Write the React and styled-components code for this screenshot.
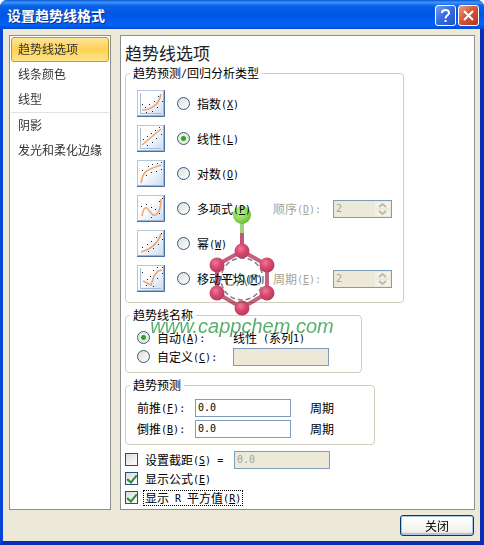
import React, {useState} from 'react';
import styled, {createGlobalStyle} from 'styled-components';

const GlobalStyle = createGlobalStyle`
  * {
    box-sizing: border-box;
  }

  body {
    margin: 0;
    font-family: "Noto Sans CJK SC", sans-serif;
    font-size: 12px;
    line-height: 14px;
    color: #000;
  }

  button, input {
    font: inherit;
  }
`;

const Window = styled.div`
  display: flex;
  flex-direction: column;
  min-height: 100vh;
  background-color: #ece9d8;
  border: solid #0846d8;
  border-width: 0 4px 4px 3px;
  border-right-color: #0a2fb4;
  border-bottom-color: #0a2fb4;
  border-radius: 7px 7px 0 0;
`;

const TitleBar = styled.header`
  display: flex;
  align-items: center;
  gap: 2px;
  height: 29px;
  margin: 0 -4px 0 -3px;
  padding: 2px 5px 0 7px;
  border-radius: 7px 7px 0 0;
  background: linear-gradient(#0a56d0 0%, #3d96ff 8%, #0a62e8 20%, #0054e3 50%, #0064fa 85%, #0048cc 100%);
`;

const Title = styled.h1`
  flex: 1;
  margin: 0;
  padding-bottom: 2px;
  font-size: 14px;
  line-height: 20px;
  font-weight: 700;
  color: #fff;
  text-shadow: 1px 1px #0a318c;
`;

const TitleButton = styled.button`
  display: flex;
  width: 21px;
  height: 21px;
  padding: 0;
  border: 1px solid #fff;
  border-radius: 3px;
  background: ${props => props.$red
    ? 'linear-gradient(135deg, #eba083, #d8563a 45%, #b5341c)'
    : 'linear-gradient(135deg, #7a9ff0, #3a6de0 45%, #1f50c8)'};
`;

const Body = styled.div`
  display: flex;
  flex: 1;
  gap: 9px;
  padding: 6px 5px 5px 6px;
`;

const Sidebar = styled.nav`
  flex: 0 0 101px;
  padding: 1px;
  border: 1px solid #8a8f94;
  background-color: #fff;
`;

const SideItem = styled.a`
  display: block;
  height: 25px;
  padding: 0 6px;
  border: 1px solid ${props => props.$active ? '#c29b29' : 'transparent'};
  border-radius: 3px;
  background: ${props => props.$active ? 'linear-gradient(#fce59b, #fdd153 50%, #fee68c)' : 'none'};
  line-height: 22px;
  color: #333;
  text-decoration: none;
  white-space: nowrap;
`;

const Divider = styled.hr`
  margin: 0;
  border: none;
  border-top: 1px solid #e2e2e2;
`;

const Panel = styled.main`
  position: relative;
  flex: 1;
  min-width: 0;
  display: flex;
  flex-direction: column;
  gap: 5px;
  padding: 6px 5px 1px 4px;
  border: 1px solid #8a8f94;
  background-color: #fff;
`;

const Heading = styled.h2`
  margin: 0 0 -5px;
  font-size: 17px;
  line-height: 22px;
  padding-bottom: 2px;
  font-weight: 400;
  color: #222;
`;

const Group = styled.fieldset`
  width: 100%;
  max-width: ${props => props.$width}px;
  min-width: 0;
  margin: 0;
  padding: 6px 11px;
  border: 1px solid #d0d0bf;
  border-radius: 4px;
`;

const Legend = styled.legend`
  margin-left: -7px;
  padding: 0 3px;
`;

const TypeRow = styled.div`
  display: flex;
  align-items: center;
  height: 35px;
  gap: 12px;
`;

const Thumb = styled.svg`
  flex: none;
  width: 28px;
  height: 27px;
`;

const RadioLabel = styled.label`
  display: flex;
  flex: 1;
  min-width: 0;
  align-items: center;
  gap: 7px;
  white-space: nowrap;
`;

const Radio = styled.input`
  appearance: none;
  flex: none;
  width: 13px;
  height: 13px;
  margin: 0;
  border: 1px solid #35597c;
  border-radius: 50%;
  background: linear-gradient(135deg, #dcdcd7, #fff);

  &:checked {
    background: radial-gradient(circle, #2fa32c 0 2px, #e6efe4 3px);
  }
`;

const Latin = styled.span`
  font-family: "DejaVu Sans Mono", monospace;
  font-size: 10px;
  line-height: 1;
  vertical-align: 1px;
  white-space: pre;
`;

const Key = styled.u`
  text-underline-offset: 1px;
`;

const OrderLabel = styled.label`
  flex: 0 0 46px;
  color: #a5a493;
  white-space: nowrap;
`;

const Spinner = styled.div`
  display: flex;
  flex: 0 0 59px;
  min-width: 0;
  height: 18px;
  border: 1px solid #7f9db9;
  background-color: #ece9d8;
`;

const SpinInput = styled.input`
  flex: 1;
  width: 0;
  min-width: 0;
  padding: 0 2px;
  border: none;
  background: none;
  font-family: "DejaVu Sans Mono", monospace;
  font-size: 10px;
  color: #a5a493;
`;

const SpinButtons = styled.svg`
  flex: none;
  width: 17px;
  height: 16px;
`;

const NameGrid = styled.div`
  display: grid;
  grid-template-columns: 96px 96px;
  grid-auto-rows: 19px;
  align-items: center;
`;

const ForecastGrid = styled.div`
  display: grid;
  grid-template-columns: 58px 96px auto;
  grid-auto-rows: 19px;
  row-gap: 2px;
  align-items: center;
`;

const Unit = styled.span`
  padding-left: 19px;
`;

const TextInput = styled.input`
  width: 96px;
  height: 18px;
  padding: 0 2px;
  border: 1px solid #7f9db9;
  background-color: #fff;
  font-family: "DejaVu Sans Mono", monospace;
  font-size: 10px;
  color: #000;

  &:disabled {
    background-color: #ece9d8;
    color: #a5a493;
  }
`;

const Options = styled.div`
  display: grid;
  grid-template-columns: 109px 96px;
  grid-auto-rows: 19px;
  align-items: center;
`;

const CheckLabel = styled.label`
  display: flex;
  grid-column-start: 1;
  align-items: center;
  gap: 5px;
  white-space: nowrap;
`;

const Checkbox = styled.input`
  appearance: none;
  flex: none;
  width: 13px;
  height: 13px;
  margin: 0;
  border: 1px solid #1c5180;
  background: linear-gradient(135deg, #dcdcd7, #fff);

  &:checked::before {
    content: '';
    display: block;
    width: 4px;
    height: 8px;
    margin: 0 auto;
    border: solid #2b8a3a;
    border-width: 0 2px 2px 0;
    transform: rotate(40deg);
  }
`;

const CheckText = styled.span`
  padding: 0 1px;
  border: 1px dotted ${props => props.$focused ? '#000' : 'transparent'};
`;

const Footer = styled.footer`
  display: flex;
  justify-content: flex-end;
  padding: 0 6px 5px;
`;

const CloseButton = styled.button`
  width: 74px;
  height: 21px;
  padding: 0;
  border: 1px solid #003c74;
  border-radius: 3px;
  background: linear-gradient(#fff, #f2f1ea 80%, #dcd8cb);
  box-shadow: inset 0 0 0 1px #a9c4ea, inset 0 -2px #a9c4ea;
  line-height: 18px;
  color: #000;
`;

const Watermark = styled.div`
  position: absolute;
  top: 170px;
  left: 29px;
  width: 184px;
  display: flex;
  flex-direction: column;
  align-items: center;
  mix-blend-mode: multiply;
  pointer-events: none;
`;

const Molecule = styled.svg`
  width: 66px;
  height: 110px;
`;

const SiteName = styled.span`
  font-family: "Liberation Sans", Arial, sans-serif;
  font-size: 20px;
  line-height: 20px;
  font-style: italic;
  color: #59b06c;
`;

const types = [
  {
    id: 'exp', text: '指数', key: 'X', curve: 'M5 20C14 20 22 15 24 4',
    dots: [[5, 14], [8, 17], [12, 14], [17, 11], [21, 6], [9, 22], [15, 21], [20, 17], [25, 11]],
  },
  {
    id: 'linear', text: '线性', key: 'L', curve: 'M5 20L24 4',
    dots: [[6, 14], [10, 11], [14, 8], [18, 5], [22, 2], [10, 20], [15, 17], [19, 13], [24, 9]],
  },
  {
    id: 'log', text: '对数', key: 'O', curve: 'M4 23C6 11 9 10 24 5', plain: true,
    dots: [[5, 10], [11, 6], [15, 4], [20, 3], [24, 2], [9, 15], [14, 12], [19, 11], [24, 9]],
  },
  {
    id: 'poly', text: '多项式', key: 'P', curve: 'M5 21C7 9 10 12 14 18S24 18 24 4', plain: true,
    dots: [[4, 11], [9, 9], [14, 12], [18, 14], [22, 6], [14, 22], [22, 18], [25, 3]], order: '顺序', orderKey: 'D',
  },
  {
    id: 'power', text: '幂', key: 'W', curve: 'M4 22C15 19 21 13 24 4', plain: true,
    dots: [[5, 17], [10, 14], [14, 11], [19, 7], [24, 3], [11, 21], [16, 18], [21, 14], [25, 9]],
  },
  {
    id: 'moving', text: '移动平均', key: 'M', curve: 'M6 16L14 20L17 11L21 6L25 5',
    dots: [[5, 7], [10, 14], [13, 11], [16, 5], [20, 2], [25, 2], [9, 20], [16, 21], [20, 13], [25, 8]], order: '周期', orderKey: 'E',
  },
];

const sections = ['趋势线选项', '线条颜色', '线型', '阴影', '发光和柔化边缘'];

const atoms = [[33, 45], [8, 59], [58, 59], [8, 87], [58, 87], [33, 102]];

const Hot = ({k, after = ''}) => <Latin>(<Key>{k}</Key>){after}</Latin>;

const TrendIcon = ({curve, dots, plain}) => (
  <Thumb viewBox="0 0 28 27" aria-hidden="true">
    <defs>
      <linearGradient id="thumbBg" x1="0" y1="0" x2="1" y2="1">
        <stop offset="0.4" stopColor="#fff"/>
        <stop offset="1" stopColor="#c3d9f2"/>
      </linearGradient>
    </defs>
    <rect x="0.5" y="0.5" width="27" height="26" fill="url(#thumbBg)" stroke="#b4c8e0"/>
    <path d="M27.500 0V26.500H0" fill="none" stroke="#4f6f9e"/>
    <path d="M26.500 1V25.500H1" fill="none" stroke="#9db6d6"/>
    {!plain && <path d="M3.500 3V23.500H24" fill="none" stroke="#a9bdd8"/>}
    <path d={curve} fill="none" stroke="#eba873" strokeWidth="1.6"/>
    {dots.map(([x, y]) => <rect key={`${x}-${y}`} x={x} y={y} width="1" height="1" fill="#222"/>)}
  </Thumb>
);

const Brand = () => (
  <Watermark aria-hidden="true">
    <Molecule viewBox="0 0 66 110">
      <defs>
        <radialGradient id="pinkBall" cx="0.4" cy="0.35" r="0.65">
          <stop offset="0" stopColor="#ee7a98"/>
          <stop offset="0.5" stopColor="#d84a70"/>
          <stop offset="1" stopColor="#b83a5c"/>
        </radialGradient>
        <radialGradient id="greenBall" cx="0.4" cy="0.35" r="0.65">
          <stop offset="0" stopColor="#bdf58e"/>
          <stop offset="0.6" stopColor="#8cdc55"/>
          <stop offset="1" stopColor="#6cb83f"/>
        </radialGradient>
      </defs>
      <path d="M33 10V28" stroke="#a0d478" strokeWidth="4"/>
      <path d="M33 27V45" stroke="#c4557a" strokeWidth="4"/>
      <path d="M33 45L58 59V87L33 102L8 87V59Z" fill="none" stroke="#c4607c" strokeWidth="4"/>
      <circle cx="33" cy="73" r="21" fill="none" stroke="#88798a" strokeWidth="1.5" strokeDasharray="5 3"/>
      <text x="33" y="80" textAnchor="middle" fontFamily="Liberation Sans" fontSize="17" fill="#7d9c86">CAC</text>
      <circle cx="33" cy="9" r="9" fill="url(#greenBall)"/>
      {atoms.map(([x, y]) => <circle key={`${x}-${y}`} cx={x} cy={y} r="7.5" fill="url(#pinkBall)"/>)}
    </Molecule>
    <SiteName>www.cappchem.com</SiteName>
  </Watermark>
);

const App = () => {
  const [type, setType] = useState('linear');
  const [name, setName] = useState('auto');

  return (
    <>
      <GlobalStyle/>
      <Window>
        <TitleBar>
          <Title>设置趋势线格式</Title>
          <TitleButton aria-label="帮助">
            <svg width="19" height="19" viewBox="0 0 19 19" fill="none" stroke="#fff" strokeWidth="2">
              <path d="M6 7C6 3 13 3 13 7C13 9.500 9.500 9 9.500 12.500M9.500 14V16"/>
            </svg>
          </TitleButton>
          <TitleButton $red aria-label="关闭窗口">
            <svg width="19" height="19" viewBox="0 0 19 19" fill="none" stroke="#fff" strokeWidth="2">
              <path d="M5 5L14 14M14 5L5 14"/>
            </svg>
          </TitleButton>
        </TitleBar>
        <Body>
          <Sidebar>
            {sections.map((text, i) => (
              <React.Fragment key={text}>
                {i === 3 && <Divider/>}
                <SideItem href="#" $active={i === 0}>{text}</SideItem>
              </React.Fragment>
            ))}
          </Sidebar>
          <Panel>
            <Heading>趋势线选项</Heading>
            <Group $width={279}>
              <Legend>趋势预测<Latin>/</Latin>回归分析类型</Legend>
              {types.map(t => (
                <TypeRow key={t.id}>
                  <TrendIcon curve={t.curve} dots={t.dots} plain={t.plain}/>
                  <RadioLabel>
                    <Radio type="radio" name="type" checked={type === t.id} onChange={() => setType(t.id)}/>
                    <span>{t.text}<Hot k={t.key}/></span>
                  </RadioLabel>
                  {t.order && (
                    <>
                      <OrderLabel htmlFor={t.id}>{t.order}<Hot k={t.orderKey} after=":"/></OrderLabel>
                      <Spinner>
                        <SpinInput id={t.id} defaultValue="2" disabled/>
                        <SpinButtons viewBox="0 0 17 16">
                          <path d="M1 1H16V7H1ZM1 9H16V15H1Z" fill="#f3f2ea"/>
                          <path d="M5 6L8.500 3L12 6M5 10L8.500 13L12 10" fill="none" stroke="#bdbbaa" strokeWidth="2"/>
                        </SpinButtons>
                      </Spinner>
                    </>
                  )}
                </TypeRow>
              ))}
            </Group>
            <Group $width={237}>
              <Legend>趋势线名称</Legend>
              <NameGrid>
                <RadioLabel>
                  <Radio type="radio" name="name" checked={name === 'auto'} onChange={() => setName('auto')}/>
                  <span>自动<Hot k="A" after=":"/></span>
                </RadioLabel>
                <span>线性<Latin> (</Latin>系列<Latin>1)</Latin></span>
                <RadioLabel>
                  <Radio type="radio" name="name" checked={name === 'custom'} onChange={() => setName('custom')}/>
                  <span>自定义<Hot k="C" after=":"/></span>
                </RadioLabel>
                <TextInput aria-label="自定义名称" disabled={name === 'auto'}/>
              </NameGrid>
            </Group>
            <Group $width={250}>
              <Legend>趋势预测</Legend>
              <ForecastGrid>
                <label htmlFor="forward">前推<Hot k="F" after=":"/></label>
                <TextInput id="forward" defaultValue="0.0"/>
                <Unit>周期</Unit>
                <label htmlFor="backward">倒推<Hot k="B" after=":"/></label>
                <TextInput id="backward" defaultValue="0.0"/>
                <Unit>周期</Unit>
              </ForecastGrid>
            </Group>
            <Options>
              <CheckLabel>
                <Checkbox type="checkbox"/>
                <CheckText>设置截距<Hot k="S" after=" ="/></CheckText>
              </CheckLabel>
              <TextInput aria-label="截距" defaultValue="0.0" disabled/>
              <CheckLabel>
                <Checkbox type="checkbox" defaultChecked/>
                <CheckText>显示公式<Hot k="E"/></CheckText>
              </CheckLabel>
              <CheckLabel>
                <Checkbox type="checkbox" defaultChecked/>
                <CheckText $focused>显示<Latin> R </Latin>平方值<Hot k="R"/></CheckText>
              </CheckLabel>
            </Options>
            <Brand/>
          </Panel>
        </Body>
        <Footer>
          <CloseButton>关闭</CloseButton>
        </Footer>
      </Window>
    </>
  );
};

export default App;
